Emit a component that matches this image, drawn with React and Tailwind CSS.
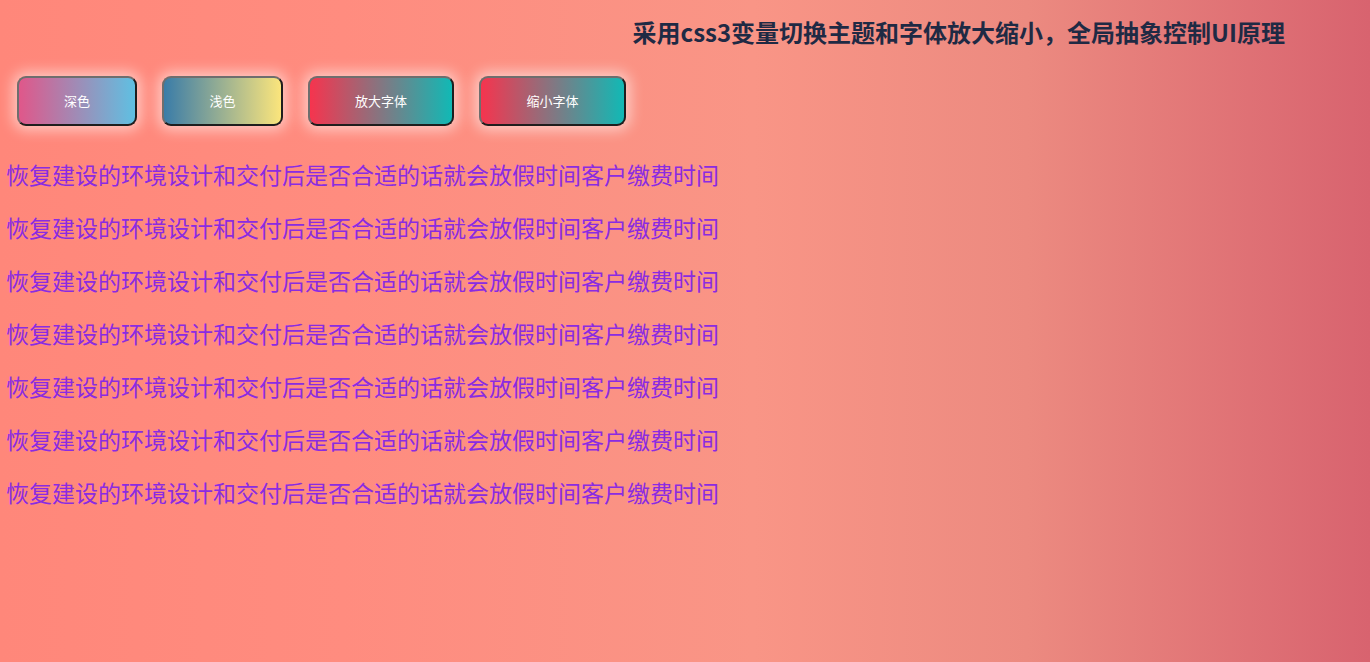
export default function App() {
  const lines = Array.from({ length: 7 });
  const btnBase =
    "h-[50px] rounded-[9px] border-2 border-t-[#6e6e6e] border-l-[#6e6e6e] border-b-[#1e1e1e] border-r-[#1e1e1e] text-white text-[13px] shadow-[0_0_14px_4px_rgba(255,255,255,0.55)] flex items-center justify-center";
  return (
    <div
      className="w-[1370px] h-[662px] overflow-hidden bg-[linear-gradient(to_right,#ff877a_0%,#ff8c7f_25%,#f99586_55%,#ec8a80_75%,#d8636f_100%)]"
      style={{ fontFamily: '"Noto Sans CJK SC", "Noto Sans", sans-serif' }}
    >
      <div className="flex justify-end pr-[85px] pt-[16px] h-[60px]">
        <h1 className="text-[24px] leading-[32px] font-bold text-[#1f2a44]">
          采用css3变量切换主题和字体放大缩小，全局抽象控制UI原理
        </h1>
      </div>
      <div className="flex items-center gap-[25px] pl-[17px] pt-[16px]">
        <button className={`${btnBase} w-[120px] bg-[linear-gradient(to_right,#e0578a,#5fc0e2)]`}>深色</button>
        <button className={`${btnBase} w-[121px] bg-[linear-gradient(to_right,#3a7ca8,#fbe57c)]`}>浅色</button>
        <button className={`${btnBase} w-[146px] bg-[linear-gradient(to_right,#f6344e,#11b9b5)]`}>放大字体</button>
        <button className={`${btnBase} w-[147px] bg-[linear-gradient(to_right,#f6344e,#11b9b5)]`}>缩小字体</button>
      </div>
      <div className="flex flex-col gap-[23px] pl-[6px] pt-[33px]">
        {lines.map((_, i) => (
          <p key={i} className="text-[23px] leading-[30px] text-[#8a2be2]">
            恢复建设的环境设计和交付后是否合适的话就会放假时间客户缴费时间
          </p>
        ))}
      </div>
    </div>
  );
}
